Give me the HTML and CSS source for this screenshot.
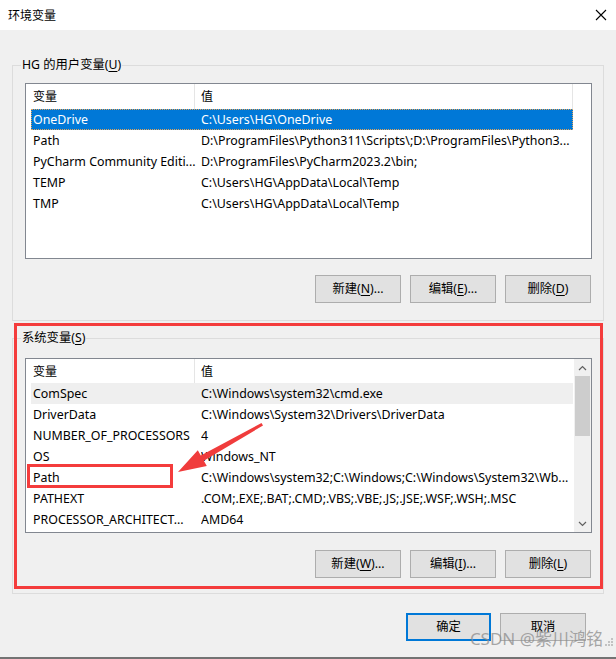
FILE: index.html
```html
<!DOCTYPE html>
<html lang="zh-CN">
<head>
<meta charset="utf-8">
<title>环境变量</title>
<link rel="stylesheet" href="styles.css">
</head>
<body>
<div class="window">
  <div class="titlebar">
    <span class="title">环境变量</span>
    <svg class="close" width="12" height="12" viewBox="0 0 12 12"><path d="M1 1 L11 11 M11 1 L1 11" stroke="#000" stroke-width="1.1" fill="none"/></svg>
  </div>
  <div class="content">
    <section class="group group-user">
      <div class="group-label">HG 的用户变量(<u>U</u>)</div>
      <div class="list list-user">
        <div class="list-body">
          <div class="list-head"><div class="hcell">变量</div><div class="hcell hcell-last">值</div></div>
          <div class="row selected"><div class="c1">OneDrive</div><div class="c2">C:\Users\HG\OneDrive</div></div>
          <div class="row"><div class="c1">Path</div><div class="c2">D:\ProgramFiles\Python311\Scripts\;D:\ProgramFiles\Python3...</div></div>
          <div class="row"><div class="c1">PyCharm Community Editi...</div><div class="c2">D:\ProgramFiles\PyCharm2023.2\bin;</div></div>
          <div class="row"><div class="c1">TEMP</div><div class="c2">C:\Users\HG\AppData\Local\Temp</div></div>
          <div class="row"><div class="c1">TMP</div><div class="c2">C:\Users\HG\AppData\Local\Temp</div></div>
        </div>
      </div>
      <div class="buttons">
        <button class="btn">新建(<u>N</u>)...</button>
        <button class="btn">编辑(<u>E</u>)...</button>
        <button class="btn">删除(<u>D</u>)</button>
      </div>
    </section>

    <section class="group group-system">
      <div class="group-label">系统变量(<u>S</u>)</div>
      <div class="list list-system">
        <div class="list-body">
          <div class="list-head"><div class="hcell">变量</div><div class="hcell">值</div></div>
          <div class="row hover"><div class="c1">ComSpec</div><div class="c2">C:\Windows\system32\cmd.exe</div></div>
          <div class="row"><div class="c1">DriverData</div><div class="c2">C:\Windows\System32\Drivers\DriverData</div></div>
          <div class="row"><div class="c1">NUMBER_OF_PROCESSORS</div><div class="c2">4</div></div>
          <div class="row"><div class="c1">OS</div><div class="c2">Windows_NT</div></div>
          <div class="row"><div class="c1">Path</div><div class="c2">C:\Windows\system32;C:\Windows;C:\Windows\System32\Wb...</div></div>
          <div class="row"><div class="c1">PATHEXT</div><div class="c2">.COM;.EXE;.BAT;.CMD;.VBS;.VBE;.JS;.JSE;.WSF;.WSH;.MSC</div></div>
          <div class="row"><div class="c1">PROCESSOR_ARCHITECT...</div><div class="c2">AMD64</div></div>
        </div>
        <div class="scrollbar">
          <div class="sb-arrow"><svg width="9" height="6" viewBox="0 0 9 6"><path d="M1 5 L4.5 1.5 L8 5" stroke="#606060" stroke-width="1.2" fill="none"/></svg></div>
          <div class="sb-track"><div class="sb-thumb"></div></div>
          <div class="sb-arrow"><svg width="9" height="6" viewBox="0 0 9 6"><path d="M1 1 L4.5 4.5 L8 1" stroke="#606060" stroke-width="1.2" fill="none"/></svg></div>
        </div>
      </div>
      <div class="buttons buttons-system">
        <button class="btn">新建(<u>W</u>)...</button>
        <button class="btn">编辑(<u>I</u>)...</button>
        <button class="btn">删除(<u>L</u>)</button>
      </div>
    </section>

    <div class="footer">
      <button class="btn btn-default">确定</button>
      <button class="btn">取消</button>
    </div>
  </div>

  <div class="annot-box"></div>
  <div class="annot-path"></div>
  <svg class="annot-arrow" width="616" height="659" viewBox="0 0 616 659">
    <polygon points="261.5,423 263,425.5 203.8,460.7 206.8,465.9 178,472 197.8,450.3 200.8,455.5" fill="#f03c3c"/>
  </svg>
  <div class="watermark">CSDN @紫川鸿铭</div>
  <svg class="grip" width="10" height="10" viewBox="0 0 10 10">
    <rect x="7" y="0" width="2" height="2" fill="#c2c2c2"/>
    <rect x="4" y="3" width="2" height="2" fill="#c2c2c2"/>
    <rect x="7" y="3" width="2" height="2" fill="#c2c2c2"/>
    <rect x="1" y="6" width="2" height="2" fill="#c2c2c2"/>
    <rect x="4" y="6" width="2" height="2" fill="#c2c2c2"/>
    <rect x="7" y="6" width="2" height="2" fill="#c2c2c2"/>
  </svg>
</div>
</body>
</html>
```

FILE: styles.css
```css
* { box-sizing: border-box; }

html, body {
  margin: 0;
  padding: 0;
  background: #f0f0f0;
}

body {
  font-family: "Noto Sans", "Noto Sans CJK SC", sans-serif;
  font-size: 12px;
  color: #000;
}

.window {
  position: relative;
  width: 616px;
  height: 659px;
  overflow: hidden;
  background: #f0f0f0;
  border-bottom: 2px solid #737373;
}

.titlebar {
  height: 30px;
  background: #fff;
  display: flex;
  align-items: center;
  justify-content: space-between;
  padding: 0 9px 1px 8px;
}

.title {
  font-family: "Noto Sans CJK SC", sans-serif;
  font-size: 12px;
  line-height: 16px;
}

.close { display: block; }

.content {
  padding: 0 12px;
}

.group {
  display: flex;
  flex-direction: column;
  width: 592px;
  border: 1px solid #dcdcdc;
  padding: 0 12px 0 12px;
}

.group-user {
  margin-top: 35px;
  padding-bottom: 17px;
}

.group-system {
  margin-top: 17px;
  padding-bottom: 15px;
}

.group-label {
  align-self: flex-start;
  margin: -9px 0 0 -4px;
  padding: 0 1px;
  line-height: 16px;
  font-size: 12.3px;
  background: #f0f0f0;
}

.group-label u,
.btn u { text-decoration-thickness: 1px; text-underline-offset: 2px; }

.list {
  display: flex;
  background: #fff;
  border: 1px solid #828790;
  width: 567px;
}

.list-user {
  margin-top: 10px;
  height: 176px;
}

.list-system {
  margin-top: 12px;
  height: 175px;
}

.list-body {
  width: 547px;
  padding-left: 5px;
}

.list-head {
  display: grid;
  grid-template-columns: 164px 1fr;
  height: 24px;
}

.list-user .list-head { height: 25px; }

.hcell {
  line-height: 24px;
  padding-left: 2px;
  border-right: 1px solid #e5e5e5;
  font-family: "Noto Sans CJK SC", sans-serif;
}

.hcell + .hcell { padding-left: 6px; }

.list-system .hcell + .hcell { border-right: none; }

.row {
  display: grid;
  grid-template-columns: 170px 1fr;
  height: 21px;
  line-height: 21px;
  font-size: 12.4px;
  white-space: nowrap;
  overflow: hidden;
}

.c1 { padding-left: 2px; overflow: hidden; }
.c2 { overflow: hidden; }

.row.selected {
  background: #0078d7;
  color: #fff;
  outline: 1px dotted #e3a45a;
  outline-offset: -1px;
}

.row.hover { background: #efefef; }

.scrollbar {
  margin-left: 1px;
  width: 17px;
  background: #f0f0f0;
  display: flex;
  flex-direction: column;
}

.sb-arrow {
  height: 17px;
  display: flex;
  align-items: center;
  justify-content: center;
}

.sb-track {
  flex: 1;
  padding: 0 1px;
}

.sb-thumb {
  height: 60px;
  background: #cdcdcd;
}

.buttons {
  display: flex;
  justify-content: flex-end;
  gap: 9px;
  margin-top: 16px;
}

.buttons-system { margin-top: 17px; }

.btn {
  width: 86px;
  height: 28px;
  padding: 0;
  background: #e1e1e1;
  border: 1px solid #adadad;
  border-radius: 0;
  font-family: "Noto Sans", "Noto Sans CJK SC", sans-serif;
  font-size: 12.3px;
  color: #000;
  line-height: 16px;
}

.footer {
  display: flex;
  justify-content: flex-end;
  gap: 9px;
  margin-top: 19px;
  padding-right: 18px;
}

.btn-default {
  width: 85px;
  border: 2px solid #0078d7;
}

.annot-box {
  position: absolute;
  left: 14px;
  top: 323px;
  width: 589px;
  height: 266px;
  border: 3px solid #f43c3c;
}

.annot-path {
  position: absolute;
  left: 27px;
  top: 464px;
  width: 146px;
  height: 24px;
  border: 3px solid #f43c3c;
}

.annot-arrow {
  position: absolute;
  left: 0;
  top: 0;
  pointer-events: none;
}

.watermark {
  position: absolute;
  right: 13px;
  top: 628px;
  font-family: "Noto Sans", "Noto Sans CJK SC", sans-serif;
  font-size: 17px;
  line-height: 22px;
  color: rgba(140, 140, 140, 0.75);
  white-space: nowrap;
}

.grip {
  position: absolute;
  left: 604px;
  top: 638px;
}
```
